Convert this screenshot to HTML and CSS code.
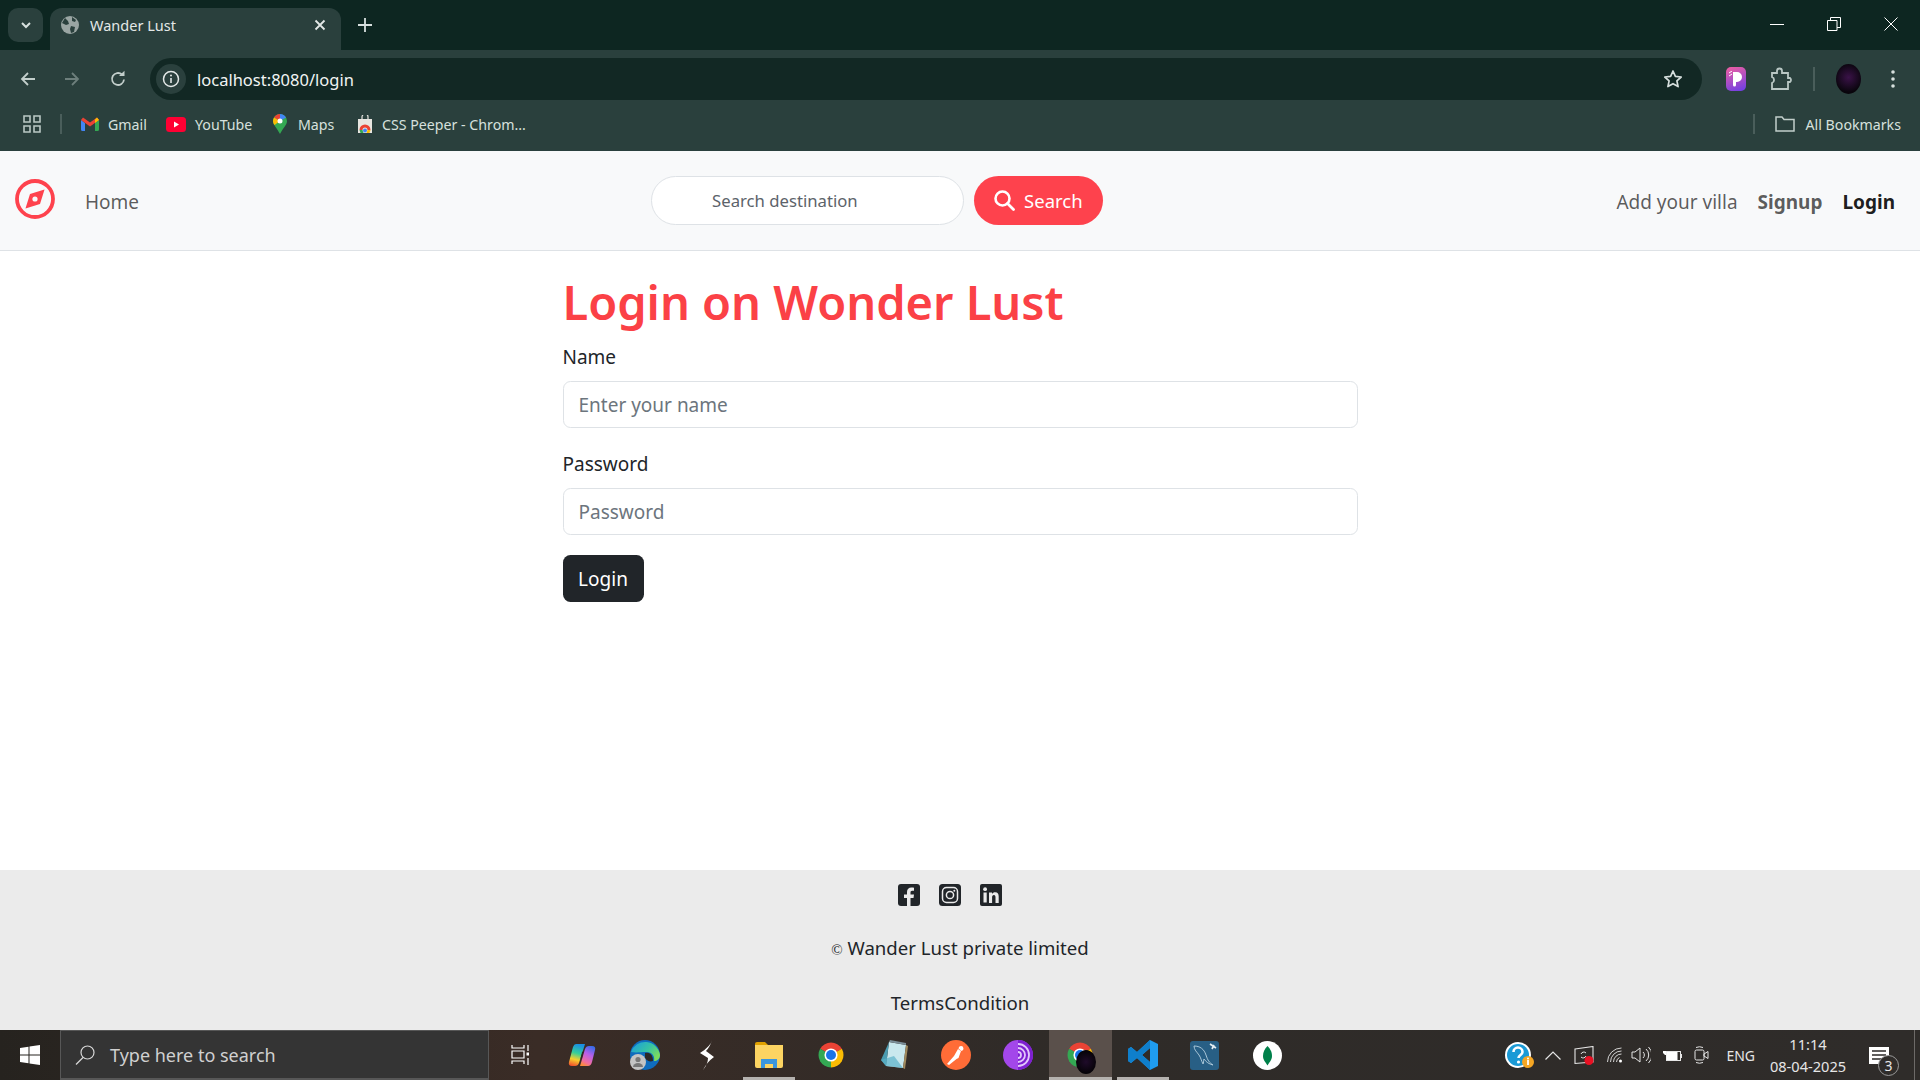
FILE: index.html
```html
<!DOCTYPE html>
<html lang="en">
<head>
  <meta charset="UTF-8" />
  <title>Wander Lust</title>
  <link rel="stylesheet" href="styles.css">
</head>
<body>
  <svg class="defs" width="0" height="0">
    <symbol id="chrome" viewBox="0 0 48 48">
      <path fill="#ea4335" d="M24 24L6.68 14A20 20 0 0 1 41.32 14Z"/>
      <path fill="#34a853" d="M24 24L24 44A20 20 0 0 1 6.68 14Z"/>
      <path fill="#fbbc04" d="M24 24L41.32 14A20 20 0 0 1 24 44Z"/>
      <circle cx="24" cy="24" r="10.5" fill="#fff"/>
      <circle cx="24" cy="24" r="8" fill="#1a73e8"/>
    </symbol>
  </svg>

  <!-- browser chrome -->
  <div class="tabstrip">
    <button class="tab-search">
      <svg width="14" height="14" viewBox="0 0 14 14"><path d="M3 5l4 4 4-4" fill="none" stroke="#d7e0de" stroke-width="2"/></svg>
    </button>
    <div class="tab">
      <svg width="18" height="18" viewBox="0 0 18 18"><circle cx="9" cy="9" r="9" fill="#9aa5a3"/><path d="M4 2l3 3 1 3-3 1-4-2zM10 10l4 1-1 5-3 1-1-4zM11 1l4 3-1 2-3-1z" fill="#2a403d"/></svg>
      <span class="tab-title">Wander Lust</span>
      <svg class="tab-close" width="12" height="12" viewBox="0 0 12 12"><path d="M1.500 1.500l9 9m0-9l-9 9" stroke="#e3e8e7" stroke-width="1.800"/></svg>
    </div>
    <svg class="new-tab" width="14" height="14" viewBox="0 0 14 14"><path d="M7 0v14M0 7h14" stroke="#d7e0de" stroke-width="1.800"/></svg>
    <div class="win-controls">
      <svg width="14" height="14" viewBox="0 0 14 14"><path d="M0 7.500h14" stroke="#fff" stroke-width="1"/></svg>
      <svg width="14" height="14" viewBox="0 0 14 14"><path d="M.5 3.500h9.500v10H.5zM3.500 3.500v-3h10v10h-3.500" fill="none" stroke="#fff"/></svg>
      <svg width="14" height="14" viewBox="0 0 14 14"><path d="M.5.500l13 13m0-13l-13 13" stroke="#fff"/></svg>
    </div>
  </div>

  <div class="toolbar">
    <svg class="tool-back" width="18" height="18" viewBox="0 0 18 18"><path d="M16 9H3M9 3L3 9l6 6" fill="none" stroke="#c2cecb" stroke-width="1.800"/></svg>
    <svg class="tool-forward" width="18" height="18" viewBox="0 0 18 18"><path d="M2 9h13M9 3l6 6-6 6" fill="none" stroke="#6d7f7c" stroke-width="1.800"/></svg>
    <svg class="tool-reload" width="18" height="18" viewBox="0 0 18 18"><path d="M15 9.500A6 6 0 1 1 13 4.500" fill="none" stroke="#c2cecb" stroke-width="1.800"/><path d="M10 6h5.500V.8z" fill="#c2cecb"/></svg>
    <div class="omnibox">
      <span class="site-info">
        <svg width="18" height="18" viewBox="0 0 18 18"><circle cx="9" cy="9" r="7.500" fill="none" stroke="#e3e8e7" stroke-width="1.500"/><path d="M9 8v5" stroke="#e3e8e7" stroke-width="1.600"/><circle cx="9" cy="5.500" r="1" fill="#e3e8e7"/></svg>
      </span>
      <span class="url">localhost:8080/login</span>
      <svg class="star" width="20" height="20" viewBox="0 0 20 20"><path d="M10 2l2.400 5.400 5.800.6-4.300 3.900 1.200 5.700-5.100-2.900-5.100 2.900 1.200-5.700L1.800 8l5.800-.6z" fill="none" stroke="#d7e0de" stroke-width="1.700" stroke-linejoin="round"/></svg>
    </div>
    <span class="ext-peeper">
      <svg width="14" height="16" viewBox="0 0 14 16"><path d="M4 1h4a5 5 0 0 1 0 10H7v3a1.500 1.500 0 0 1-3 0z" fill="#fff"/><path d="M0 2l3-2M0 5l3-2" stroke="#fff"/></svg>
    </span>
    <svg class="ext-puzzle" width="22" height="24" viewBox="0 0 22 24"><path d="M2 6h5V4a2.500 2.500 0 0 1 5 0v2h6v5h2a2.500 2.500 0 0 1 0 4h-2v7H2v-6a3 3 0 0 0 2-3 3 3 0 0 0-2-3z" fill="none" stroke="#b9c7c4" stroke-width="1.800"/></svg>
    <span class="tool-sep"></span>
    <span class="avatar"></span>
    <svg class="tool-menu" width="4" height="18" viewBox="0 0 4 18"><circle cx="2" cy="2" r="1.800" fill="#d7e0de"/><circle cx="2" cy="9" r="1.800" fill="#d7e0de"/><circle cx="2" cy="16" r="1.800" fill="#d7e0de"/></svg>
  </div>

  <div class="bookmarks">
    <svg class="apps" width="18" height="18" viewBox="0 0 18 18"><path d="M1 1h6v6H1zM11 1h6v6h-6zM1 11h6v6H1zM11 11h6v6h-6z" fill="none" stroke="#b9c7c4" stroke-width="1.600"/></svg>
    <span class="bm-sep"></span>
    <a class="bookmark bm-gmail">
      <svg width="18" height="14" viewBox="0 0 18 14"><path d="M0 3v9.500A1.500 1.500 0 0 0 1.500 14H4V6z" fill="#4285f4"/><path d="M18 3v9.500a1.500 1.500 0 0 1-1.500 1.500H14V6z" fill="#34a853"/><path d="M0 3l9 6.500L18 3 16 .5 9 5.500 2 .5z" fill="#ea4335"/><path d="M14 2.500V6l4-3-2-2.500z" fill="#fbbc04"/></svg>
      Gmail
    </a>
    <a class="bookmark bm-youtube">
      <svg width="20" height="15" viewBox="0 0 20 15"><rect width="20" height="15" rx="3.500" fill="#ff0033"/><path d="M8 4.500v6l5-3z" fill="#fff"/></svg>
      YouTube
    </a>
    <a class="bookmark bm-maps">
      <svg width="14" height="20" viewBox="0 0 14 20"><path d="M7 0a7 7 0 0 1 7 7c0 4-4 7-7 13-3-6-7-9-7-13a7 7 0 0 1 7-7z" fill="#34a853"/><path d="M7 0a7 7 0 0 1 6 3.500L7 7z" fill="#4285f4"/><path d="M1 3.500A7 7 0 0 1 7 0v7z" fill="#ea4335"/><path d="M0 7c0 1.500.7 3 1.500 4L7 7 1 3.500A7 7 0 0 0 0 7z" fill="#fbbc04"/><circle cx="7" cy="7" r="2.500" fill="#fff"/></svg>
      Maps
    </a>
    <a class="bookmark bm-peeper">
      <svg width="16" height="18" viewBox="0 0 16 18"><path d="M1 4h14v14H1z" fill="#e8e6e1"/><path d="M5 4V2a3 3 0 0 1 6 0v2" fill="none" stroke="#e8e6e1" stroke-width="1.200"/><path d="M2.500 15a5.500 5.500 0 0 1 11 0h-3a2.500 2.500 0 0 0-5 0z" fill="#ea4335"/><path d="M2.500 15h3l1 3h-3z" fill="#34a853"/><path d="M10.500 15h3l-1 3h-3z" fill="#fbbc04"/><circle cx="8" cy="15.500" r="2" fill="#4285f4"/></svg>
      CSS Peeper - Chrom...
    </a>
    <span class="bm-sep bm-sep-right"></span>
    <a class="bookmark bm-all">
      <svg width="20" height="16" viewBox="0 0 20 16"><path d="M1 1h6l2 2.500h10V15H1z" fill="none" stroke="#c2cecb" stroke-width="1.500"/></svg>
      All Bookmarks
    </a>
  </div>

  <!-- the page itself -->
  <nav class="navbar">
    <a class="brand">
      <svg width="40" height="40" viewBox="0 0 40 40"><circle cx="20" cy="20" r="18" fill="none" stroke="#fe424d" stroke-width="3.800"/><path d="M29.500 10.500L25 25 10.500 29.500 15 15z" fill="#fe424d"/><circle cx="20" cy="20" r="2.600" fill="#f8f9fa"/></svg>
    </a>
    <a class="nav-link home-link">Home</a>
    <form class="search-form">
      <input class="search-input" type="text" placeholder="Search destination" />
      <button class="search-btn" type="button">
        <svg width="21" height="21" viewBox="0 0 21 21"><circle cx="8.500" cy="8.500" r="7" fill="none" stroke="#fff" stroke-width="2.600"/><path d="M13.500 13.500l6 6" stroke="#fff" stroke-width="2.800" stroke-linecap="round"/></svg>
        Search
      </button>
    </form>
    <div class="nav-right">
      <a class="nav-link">Add your villa</a>
      <a class="nav-link nav-bold">Signup</a>
      <a class="nav-link nav-bold nav-active">Login</a>
    </div>
  </nav>

  <main class="content">
    <h1 class="page-title">Login on Wonder Lust</h1>
    <form>
      <div class="field">
        <label class="field-label" for="username">Name</label>
        <input class="field-input" id="username" type="text" placeholder="Enter your name" />
      </div>
      <div class="field">
        <label class="field-label" for="password">Password</label>
        <input class="field-input" id="password" type="password" placeholder="Password" />
      </div>
      <button class="login-btn" type="button">Login</button>
    </form>
  </main>

  <footer class="footer">
    <div class="socials">
      <svg width="22" height="22" viewBox="0 0 22 22"><rect width="22" height="22" rx="3" fill="#212529"/><path d="M9 22v-8H6v-3.500h3V8c0-3 1.800-4.500 4.400-4.500 1 0 2 .1 2.600.3v3h-1.700c-1.400 0-1.800.8-1.800 1.700v2H16l-.5 3.500h-3v8z" fill="#ebebeb"/></svg>
      <svg width="22" height="22" viewBox="0 0 22 22"><rect width="22" height="22" rx="3.500" fill="#212529"/><rect x="3.500" y="3.500" width="15" height="15" rx="4" fill="none" stroke="#ebebeb" stroke-width="1.500"/><circle cx="11" cy="11" r="3.600" fill="none" stroke="#ebebeb" stroke-width="1.500"/><circle cx="15.300" cy="6.700" r="1" fill="#ebebeb"/></svg>
      <svg width="22" height="22" viewBox="0 0 22 22"><rect width="22" height="22" rx="2" fill="#212529"/><rect x="3.500" y="8.500" width="3.200" height="10" fill="#ebebeb"/><circle cx="5.100" cy="5.200" r="1.900" fill="#ebebeb"/><path d="M9 8.500h3v1.400c.6-1 1.800-1.700 3.200-1.700 2.700 0 3.500 1.800 3.500 4.400v6.400h-3.200v-5.700c0-1.300-.3-2.300-1.600-2.300s-1.800 1-1.800 2.300v5.700H9z" fill="#ebebeb"/></svg>
    </div>
    <p class="copyright"><span class="copy-mark">&copy;</span> Wander Lust private limited</p>
    <p class="terms"><a>Terms</a><a>Condition</a></p>
  </footer>

  <!-- windows taskbar -->
  <div class="taskbar">
    <div class="start">
      <svg width="20" height="20" viewBox="0 0 20 20"><path d="M0 3l8.500-1.300v7.800H0zM9.500 1.500L20 0v9.500H9.500zM0 10.500h8.500v7.800L0 17zM9.500 10.500H20V20L9.500 18.500z" fill="#fff"/></svg>
    </div>
    <div class="task-search">
      <svg width="20" height="20" viewBox="0 0 20 20"><circle cx="12.500" cy="7.500" r="6.500" fill="none" stroke="#d8d8d8" stroke-width="1.200"/><path d="M8 12.500L1 19.500" stroke="#d8d8d8" stroke-width="1.200"/></svg>
      <span>Type here to search</span>
    </div>
    <div class="task-icons">
      <span class="task-icon"><svg width="18" height="20" viewBox="0 0 18 20"><path d="M1 0v3h12V0M1 19v-3h12v3M1 6h12v7H1zM17 0v6M17 13v7" fill="none" stroke="#fff" stroke-width="1.200"/><rect x="15.500" y="7.500" width="3" height="3" fill="#fff"/></svg></span>
      <span class="task-icon"><svg width="28" height="26" viewBox="0 0 28 26"><defs><linearGradient id="cp1" x1="0.500" y1="0" x2="0.300" y2="1"><stop offset="0" stop-color="#1a8fe3"/><stop offset=".4" stop-color="#35cf9a"/><stop offset=".7" stop-color="#f7d02c"/><stop offset="1" stop-color="#f0532d"/></linearGradient><linearGradient id="cp2" x1="0.700" y1="0" x2="0.300" y2="1"><stop offset="0" stop-color="#3b6be8"/><stop offset=".4" stop-color="#b660ea"/><stop offset=".8" stop-color="#f26d9d"/><stop offset="1" stop-color="#fb8a3c"/></linearGradient></defs><path d="M8 2h9L11 21q-1 3-4 3H4q-4 0-3-4l4-15q1-3 3-3z" fill="url(#cp1)"/><path d="M20 24h-8l5-17q1-3 4-3h3q4 0 3 4l-3 12q-1 4-4 4z" fill="url(#cp2)"/><path d="M14 10.500q1-1.500 1.500-.5l-1.500 6q-1 1.500-1.500.5z" fill="#2c2825"/></svg></span>
      <span class="task-icon"><svg width="30" height="30" viewBox="0 0 30 30"><defs><linearGradient id="edge" x1="0" y1="0" x2="1" y2="0.600"><stop offset="0" stop-color="#1a9be0"/><stop offset=".6" stop-color="#36c3a4"/><stop offset="1" stop-color="#7bdc5e"/></linearGradient></defs><circle cx="15" cy="15" r="15" fill="#0f6cbd"/><path d="M1 12A15 15 0 0 1 30 15c0 4-3 6-6 6 1-4-1-9-8-9-6 0-9 1-15 0z" fill="url(#edge)"/><path d="M15 13c4-1 8 1 8 8-3 1-6 0-8-3z" fill="#2c2825"/><circle cx="8" cy="22" r="8" fill="#c4c4c4"/><circle cx="8" cy="19.500" r="2.600" fill="#777"/><path d="M3 27a5 4 0 0 1 10 0z" fill="#777"/></svg></span>
      <span class="task-icon"><svg width="15" height="30" viewBox="0 0 15 30"><path d="M13 0Q12 6 1 13l8 5q0 6-5 12 4-8 11-13l-8-6q4-4 6-11z" fill="#fff"/></svg></span>
      <span class="task-icon task-open"><svg width="28" height="26" viewBox="0 0 28 26"><path d="M0 2a2 2 0 0 1 2-2h8l3 3H0z" fill="#e0a100"/><path d="M0 3h28v21a2 2 0 0 1-2 2H2a2 2 0 0 1-2-2z" fill="#fcd462"/><path d="M6 26v-9h16v9h-4v-4h-8v4z" fill="#3a96dd"/></svg></span>
      <span class="task-icon"><svg width="30" height="30"><use href="#chrome"/></svg></span>
      <span class="task-icon"><svg width="28" height="30" viewBox="0 0 28 30"><path d="M9 2l17 3-3 23-17-2z" fill="#c9e8ee"/><path d="M9 2l-8 18 5 6z" fill="#4a9bb0"/><path d="M26 5l2 1-3 23-2-1z" fill="#a08a5e"/><path d="M9 2l17 3v-2L10 0z" fill="#7b8f99"/><path d="M1 20l5 6 17 2-9-12z" fill="#5bb2c9" opacity=".7"/></svg></span>
      <span class="task-icon"><svg width="30" height="30" viewBox="0 0 30 30"><circle cx="15" cy="15" r="15" fill="#ff6c37"/><path d="M6 24l7-8 2.500 3-7.500 6zM13 16l4-7 3 2-2.500 7-2 1zM17.500 8.500a2.500 2.500 0 1 1 3 2.500z" fill="#fff"/></svg></span>
      <span class="task-icon"><svg width="30" height="30" viewBox="0 0 30 30"><circle cx="15" cy="15" r="15" fill="#a347ea"/><path d="M15 0a15 15 0 0 1 0 30z" fill="#7d1fd0"/><path d="M15 4a11 11 0 0 1 0 22M15 8a7 7 0 0 1 0 14M15 12a3 3 0 0 1 0 6" fill="none" stroke="#e2c7fb" stroke-width="1.800"/></svg></span>
      <span class="task-icon task-active"><svg width="30" height="30"><use href="#chrome"/></svg><span class="task-badge"></span></span>
      <span class="task-icon task-open"><svg width="30" height="30" viewBox="0 0 30 30"><path d="M22 0l8 4v22l-8 4-13-12-6 5-3-2V9l3-2 6 5zM22 8l-8 7 8 7z" fill="#1f9cf0"/><path d="M22 0L9 12l-6-5-3 2v12l3 2 6-5 13 12V22l-8-7 8-7z" fill="#0f7fcc"/></svg></span>
      <span class="task-icon"><svg width="29" height="29" viewBox="0 0 29 29"><rect width="29" height="29" rx="3" fill="#285f85"/><path d="M4 5c6 0 10 3 12 9s3 7 7 10c-4-1-7-3-9-6-1 2 0 4-1 5-2-4-2-6-4-9S4 9 4 5z" fill="none" stroke="#a9c6d8"/><path d="M20 3l6 4M22 8l2-4" stroke="#e4edf2" stroke-width="1.700"/></svg></span>
      <span class="task-icon"><svg width="29" height="29" viewBox="0 0 29 29"><circle cx="14.500" cy="14.500" r="14.500" fill="#fff"/><path d="M14.500 5c3 3 4.500 6 4.500 10s-2.500 6-4.500 9.500c-2-3.500-4.500-5.500-4.500-9.500s1.500-7 4.500-10z" fill="#00804a"/></svg></span>
    </div>
    <div class="tray">
      <svg class="tray-help" width="29" height="27" viewBox="0 0 29 27"><circle cx="13" cy="13" r="13" fill="#fff"/><circle cx="13" cy="13" r="11" fill="#1a9ad6"/><path d="M8.500 10a4.500 4.500 0 0 1 9 0c0 3-4 3-4 6" fill="none" stroke="#fff" stroke-width="2.600"/><circle cx="13.500" cy="20" r="1.600" fill="#fff"/><circle cx="23" cy="20" r="6" fill="#f5a623"/><path d="M23 18v5" stroke="#fff" stroke-width="1.800"/><circle cx="23" cy="16.500" r="1" fill="#fff"/></svg>
      <svg class="tray-up" width="16" height="9" viewBox="0 0 16 9"><path d="M.5 8.500L8 1l7.500 7.500" fill="none" stroke="#e6e6e6" stroke-width="1.200"/></svg>
      <svg class="tray-item tray-screen" width="20" height="19" viewBox="0 0 20 19"><path d="M1 3l18-2.500V16L1 17.500z" fill="none" stroke="#e6e6e6" stroke-width="1.100"/><path d="M7 8a3 3 0 0 1 5-1M12 10a3 3 0 0 1-5 1" fill="none" stroke="#e6e6e6"/><circle cx="15" cy="14.500" r="4.500" fill="#e81123"/></svg>
      <svg class="tray-item tray-wifi" width="16" height="16" viewBox="0 0 16 16"><path d="M.5 15a14 14 0 0 1 14-14M3.500 15a11 11 0 0 1 11-11M6.500 15a8 8 0 0 1 8-8M9.500 15a5 5 0 0 1 3-4.500" fill="none" stroke="#e6e6e6" stroke-width=".9"/><circle cx="13.500" cy="14" r="1.500" fill="#fff"/></svg>
      <svg class="tray-item" width="20" height="18" viewBox="0 0 20 18"><path d="M1 6h3l5-4v14l-5-4H1z" fill="none" stroke="#e6e6e6"/><path d="M12 6a4 4 0 0 1 0 6M15 3a8 8 0 0 1 0 12M17.500 1a11 11 0 0 1 0 16" fill="none" stroke="#e6e6e6"/></svg>
      <svg class="tray-item tray-battery" width="20" height="14" viewBox="0 0 20 14"><path d="M3 0v3M6 0v3M1 3h7v2l-2 2H3L1 5z" fill="#fff"/><rect x="4.500" y="3.500" width="14" height="9" fill="none" stroke="#e6e6e6"/><rect x="4.500" y="4" width="11" height="8" fill="#fff"/><rect x="19" y="6" width="1" height="4" fill="#e6e6e6"/></svg>
      <svg class="tray-item" width="15" height="20" viewBox="0 0 15 20"><rect x="1" y="5" width="9" height="10" rx="1.500" fill="none" stroke="#e6e6e6"/><path d="M10 9l4-2.500v7L10 11zM2 2.500a9 9 0 0 1 7 0M2 17.500a9 9 0 0 0 7 0" fill="none" stroke="#e6e6e6"/></svg>
      <span class="lang">ENG</span>
      <div class="clock"><span>11:14</span><span>08-04-2025</span></div>
      <div class="notify">
        <svg width="20" height="17" viewBox="0 0 20 17"><path d="M0 0h20v17H0z" fill="#fff"/><path d="M3 4h14M3 8h14M3 12h10" stroke="#2d2a28" stroke-width="1.300"/></svg>
        <span class="notify-count">3</span>
      </div>
      <span class="show-desktop"></span>
    </div>
  </div>
</body>
</html>
```

FILE: styles.css
```css
* {
  box-sizing: border-box;
}
body {
  margin: 0;
  width: 1920px;
  height: 1080px;
  overflow: hidden;
  display: flex;
  flex-direction: column;
  font-family: 'Noto Sans', sans-serif;
  background: #fff;
  color: #212529;
}
a {
  text-decoration: none;
  color: inherit;
}
svg {
  display: block;
  flex: none;
}
.defs {
  position: absolute;
}

/* tab strip */
.tabstrip {
  height: 50px;
  background: #0d2621;
  display: flex;
  align-items: flex-end;
  flex: none;
}
.tab-search {
  width: 35px;
  height: 34px;
  margin: 0 7px 8px 8px;
  padding: 0;
  border: none;
  border-radius: 10px;
  background: #2a403d;
  display: flex;
  align-items: center;
  justify-content: center;
}
.tab {
  width: 291px;
  height: 42px;
  padding: 0 15px 8px 11px;
  border-radius: 12px 12px 0 0;
  background: #2a403d;
  display: flex;
  align-items: center;
  color: #e3e8e7;
  font-size: 14.500px;
}
.tab-title {
  margin-left: 11px;
}
.tab-close {
  margin-left: auto;
}
.new-tab {
  margin: 0 0 18px 17px;
}
.win-controls {
  margin: 0 22px 19px auto;
  display: flex;
  gap: 43px;
}

/* toolbar */
.toolbar {
  height: 58px;
  padding: 8px 0;
  background: #2a403d;
  display: flex;
  align-items: center;
  flex: none;
}
.tool-back {
  margin-left: 19px;
}
.tool-forward {
  margin-left: 26px;
}
.tool-reload {
  margin-left: 28px;
}
.omnibox {
  width: 1552px;
  height: 42px;
  margin-left: 23px;
  padding: 0 19px 0 6px;
  border-radius: 21px;
  background: #122824;
  display: flex;
  align-items: center;
  color: #f1f4f3;
  font-size: 16.500px;
}
.site-info {
  width: 30px;
  height: 30px;
  border-radius: 50%;
  background: #2a403d;
  display: flex;
  align-items: center;
  justify-content: center;
}
.url {
  margin-left: 11px;
}
.star {
  margin-left: auto;
}
.ext-peeper {
  width: 20px;
  height: 24px;
  margin-left: 24px;
  border-radius: 5px;
  background: linear-gradient(160deg, #f05fa0, #6a3de8);
  display: flex;
  align-items: center;
  justify-content: center;
}
.ext-puzzle {
  margin-left: 24px;
}
.tool-sep {
  width: 2px;
  height: 24px;
  margin-left: 21px;
  background: #4a5e5b;
}
.avatar {
  width: 25px;
  height: 30px;
  margin-left: 21px;
  border-radius: 50%;
  background: radial-gradient(circle at 50% 45%, #3a1248, #09050c 70%);
}
.tool-menu {
  margin-left: 30px;
}

/* bookmarks bar */
.bookmarks {
  height: 43px;
  padding-bottom: 11px;
  background: #2a403d;
  display: flex;
  align-items: center;
  flex: none;
  color: #d7e0de;
  font-size: 14.200px;
}
.apps {
  margin-left: 23px;
}
.bm-sep {
  width: 2px;
  height: 20px;
  margin: 0 19px 0 19px;
  background: #4a5e5b;
}
.bookmark {
  display: flex;
  align-items: center;
  gap: 9px;
}
.bm-gmail {
  width: 85px;
}
.bm-youtube {
  width: 107px;
}
.bm-maps {
  width: 84px;
  gap: 11px;
}
.bm-peeper {
  gap: 9px;
}
.bm-sep-right {
  margin: 0 20px 0 auto;
}
.bm-all {
  margin-right: 19px;
  gap: 11px;
}

/* navbar */
.navbar {
  height: 100px;
  padding: 0 25px 0 15px;
  background: #f8f9fa;
  border-bottom: 1px solid #dee2e6;
  display: flex;
  align-items: center;
  flex: none;
}
.nav-link {
  margin-top: 2px;
  color: rgba(0, 0, 0, 0.65);
  font-size: 19px;
}
.nav-bold {
  font-weight: 700;
}
.nav-active {
  color: rgba(0, 0, 0, 0.9);
}
.home-link {
  margin-left: 30px;
}
.brand {
  display: block;
  margin-bottom: 4px;
}
.search-form {
  margin-left: 512px;
  display: flex;
  gap: 10px;
}
.search-input {
  width: 313px;
  height: 49px;
  padding: 0 12px 0 60px;
  border: 1px solid #dee2e6;
  border-radius: 25px;
  background: #fff;
  font-family: inherit;
  font-size: 16.700px;
  color: #212529;
  outline: none;
}
.search-input::placeholder {
  color: #5c636a;
  opacity: 1;
}
.search-btn {
  width: 129px;
  height: 49px;
  padding: 0 0 0 20px;
  border: none;
  border-radius: 25px;
  background: #fe424d;
  color: #fff;
  font-family: inherit;
  font-size: 18.500px;
  display: flex;
  align-items: center;
  gap: 9px;
}
.nav-right {
  margin-left: auto;
  display: flex;
  gap: 20px;
}

/* login form */
.content {
  width: 795px;
  margin: 0 auto;
  flex: 1;
}
.page-title {
  margin: 21px 0 9px;
  color: #fb4146;
  font-size: 47px;
  font-weight: 600;
  line-height: 60px;
}
.field {
  margin-bottom: 20px;
}
.field-label {
  display: block;
  margin-bottom: 8px;
  font-size: 19px;
  line-height: 32px;
}
.field-input {
  display: block;
  width: 100%;
  height: 47px;
  padding: 0 15px;
  border: 1px solid #dee2e6;
  border-radius: 7.500px;
  background: #fff;
  font-family: inherit;
  font-size: 19px;
  color: #212529;
  outline: none;
}
.field-input::placeholder {
  color: #6c757d;
  opacity: 1;
}
.login-btn {
  width: 81px;
  height: 47px;
  padding: 0;
  border: none;
  border-radius: 7.500px;
  background: #212529;
  color: #fff;
  font-family: inherit;
  font-size: 19px;
}

/* footer */
.footer {
  height: 160px;
  padding-top: 14px;
  background: #ebebeb;
  display: flex;
  flex-direction: column;
  align-items: center;
  flex: none;
  font-size: 18.600px;
}
.socials {
  margin-right: 20px;
  display: flex;
  gap: 19px;
}
.copyright {
  margin: 27px 0 0;
  line-height: 30px;
}
.copy-mark {
  font-family: 'Liberation Serif', serif;
  font-size: 15px;
}
.terms {
  margin: 23px 0 0;
  line-height: 30px;
}

/* taskbar */
.taskbar {
  height: 50px;
  background: linear-gradient(90deg, #26231f 0%, #3a2c26 28%, #2f2b28 55%, #2f2c2a 100%);
  display: flex;
  align-items: center;
  flex: none;
  color: #e6e6e6;
}
.start {
  width: 60px;
  display: flex;
  justify-content: center;
}
.task-search {
  width: 429px;
  height: 50px;
  padding-left: 14px;
  background: #343434;
  border: 1px solid #575757;
  border-bottom-width: 2px;
  display: flex;
  align-items: center;
  gap: 15px;
  color: #d0d0d0;
  font-size: 18px;
}
.task-icons {
  display: flex;
}
.task-icon {
  position: relative;
  width: 62.250px;
  height: 50px;
  display: flex;
  align-items: center;
  justify-content: center;
}
.task-open::after {
  content: '';
  position: absolute;
  left: 5px;
  right: 5px;
  bottom: 0;
  height: 3px;
  background: #b5b2af;
}
.task-active {
  background: #5a504b;
}
.task-active::after {
  content: '';
  position: absolute;
  left: 0;
  right: 0;
  bottom: 0;
  height: 3px;
  background: #b5b2af;
}
.task-badge {
  position: absolute;
  left: 27px;
  top: 20px;
  width: 20px;
  height: 24px;
  border-radius: 50%;
  background: radial-gradient(circle, #1f0b2a, #060308 70%);
}
.tray {
  margin-left: auto;
  height: 50px;
  display: flex;
  align-items: center;
}
.tray-help {
  margin-right: 11px;
}
.tray-up {
  margin-right: 13px;
}
.tray-item {
  margin-right: 11px;
}
.tray-screen {
  margin-right: 13px;
}
.tray-wifi {
  margin-right: 8px;
}
.tray-battery {
  margin-right: 12px;
}
.lang {
  margin-left: 6px;
  font-size: 14px;
}
.clock {
  width: 78px;
  margin-left: 14px;
  display: flex;
  flex-direction: column;
  align-items: center;
  gap: 2px;
  font-size: 14.600px;
  line-height: 20px;
}
.notify {
  position: relative;
  margin-left: 22px;
  width: 45px;
  height: 50px;
  display: flex;
  align-items: center;
}
.notify-count {
  position: absolute;
  left: 9px;
  top: 25px;
  width: 21px;
  height: 21px;
  border: 1px solid #9a9a9a;
  border-radius: 50%;
  background: #2f2c2a;
  text-align: center;
  font-size: 14px;
  line-height: 19px;
}
.show-desktop {
  width: 1px;
  height: 50px;
  margin-right: 5px;
  background: #6d6a68;
}
```
